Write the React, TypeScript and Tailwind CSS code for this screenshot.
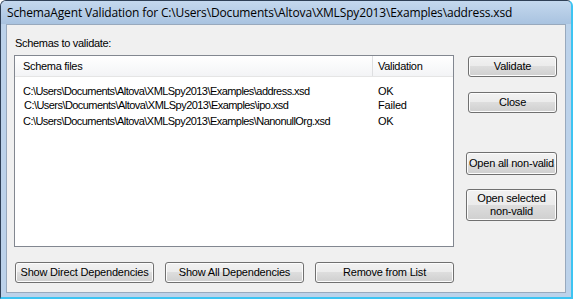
import React from "react";

const btn =
  "flex items-center justify-center rounded-[3px] border border-[#707070] bg-[linear-gradient(#f2f2f2_0%,#ebebeb_50%,#dddddd_50%,#cfcfcf_100%)] shadow-[inset_0_0_0_1px_#fcfcfc] text-[11px] leading-[13px] text-black text-center tracking-[-0.2px]";

export default function App() {
  const rows = [
    { f: "C:\\Users\\Documents\\Altova\\XMLSpy2013\\Examples\\address.xsd", v: "OK", h: "h-[14px]", pl: "pl-[8px]" },
    { f: "C:\\Users\\Documents\\Altova\\XMLSpy2013\\Examples\\ipo.xsd", v: "Failed", h: "h-[14px]", pl: "pl-[9px]" },
    { f: "C:\\Users\\Documents\\Altova\\XMLSpy2013\\Examples\\NanonullOrg.xsd", v: "OK", h: "h-[17px]", pl: "pl-[8px]" },
  ];
  return (
    <div className="w-[573px] h-[300px] overflow-hidden bg-white" style={{ fontFamily: '"Liberation Sans", Arial, sans-serif' }}>
      <div className="w-[573px] h-[299px] rounded-t-[6px] border border-[#2f4056] bg-[#bcd2ea] flex flex-col border-r-[#3dc4f2] border-b-[#3dc4f2] border-r-2 border-b-2">
        <div className="h-[23px] rounded-t-[5px] bg-[linear-gradient(#c4d8ee,#a9c3e0)] flex items-center pl-[6px] text-[12px] text-black" style={{ fontFamily: '"Open Sans", sans-serif', letterSpacing: "-0.15px" }}>
          SchemaAgent Validation for C:\Users\Documents\Altova\XMLSpy2013\Examples\address.xsd
        </div>
        <div className="flex-1 mx-[5px] mb-[4px] bg-[#f0f0f0] border border-[#98a9bd] flex flex-col pl-[7px]">
          <div className="flex">
            <div className="flex flex-col w-[440px]">
              <div className="h-[12px] mt-[12px] text-[11px] leading-[12px] text-black pl-[1px] tracking-[-0.3px]">Schemas to validate:</div>
              <div className="mt-[6px] h-[192px] border border-[#828790] bg-white flex flex-col">
                <div className="h-[21px] flex items-center text-[11px] tracking-[-0.3px] bg-[linear-gradient(#ffffff,#f3f4f6)] border-b border-[#e5e5e5]">
                  <div className="w-[357px] pl-[8px] pt-[1px]">Schema files</div>
                  <div className="w-px h-full bg-[#dedfe1]" />
                  <div className="pl-[5px] pt-[1px]">Validation</div>
                </div>
                <div className="mt-[7px] flex flex-col text-[11px] leading-[14px] text-black tracking-[-0.55px]">
                  {rows.map((r, i) => (
                    <div key={i} className={`flex ${r.h} items-center`}>
                      <div className={`w-[358px] ${r.pl}`}>{r.f}</div>
                      <div className="pl-[5px] tracking-[-0.2px]">{r.v}</div>
                    </div>
                  ))}
                </div>
              </div>
            </div>
            <div className="ml-[12px] mt-[31px] flex flex-col w-[91px]">
              <div className={`${btn} h-[21px] ml-[2px] w-[89px]`}>Validate</div>
              <div className={`${btn} h-[21px] ml-[2px] w-[89px] mt-[15px]`}>Close</div>
              <div className={`${btn} h-[23px] mt-[39px] w-[91px]`}>Open all non-valid</div>
              <div className={`${btn} h-[32px] mt-[14px] w-[91px]`}>Open selected<br />non-valid</div>
            </div>
          </div>
          <div className="flex mt-[15px] gap-[11px] pl-[1px]">
            <div className={`${btn} h-[21px] w-[139px]`}>Show Direct Dependencies</div>
            <div className={`${btn} h-[21px] w-[139px]`}>Show All Dependencies</div>
            <div className={`${btn} h-[21px] w-[139px]`}>Remove from List</div>
          </div>
        </div>
      </div>
    </div>
  );
}
